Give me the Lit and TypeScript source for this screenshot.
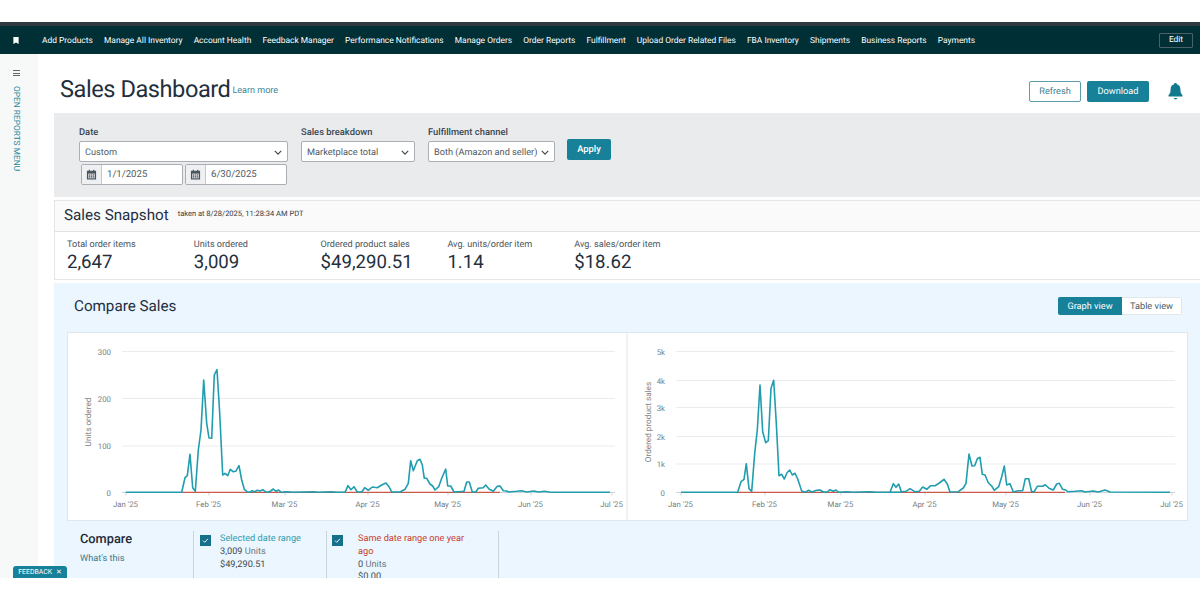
import { LitElement, html, css, svg } from "lit";
import { customElement } from "lit/decorators.js";

type P = [number, number];
const conv = (pts: P[], ox: number): P[] => pts.map(([x, y]) => [ox + x / 3, 330 + y / 3]);

const L1: P[] = [
  ...conv([[197,487],[365,487],[375,443],[382,437],[390,373],[398,473],[406,484],[415,360],[423,300],[431,150],[440,280],[447,324],[455,325],[463,135],[471,119],[479,250],[488,435],[495,430],[503,437],[511,418],[519,425],[527,424],[537,407],[545,450],[553,478],[561,485],[569,487],[576,482],[584,485],[592,481],[600,483],[608,479],[616,485],[624,487],[632,483],[640,477],[648,484],[656,480],[664,487],[680,485],[700,487],[760,485],[775,487],[815,485],[830,487]], 60),
  ...conv([[15,487],[24,467],[33,479],[42,470],[52,486],[65,486],[74,473],[85,481],[97,471],[112,473],[125,465],[138,459],[147,470],[155,486],[180,486],[195,478],[205,460],[212,392],[220,422],[232,392],[240,388],[247,405],[253,445],[260,445],[270,462],[278,468],[285,480],[296,470],[305,445],[317,417],[323,468],[332,468],[342,486],[355,485],[372,484],[380,456],[388,456],[397,486],[407,486],[415,475],[430,473],[437,465],[447,477],[460,484],[472,469],[480,468],[490,482],[500,483],[505,486],[530,484],[545,482],[560,486],[582,483],[595,486],[615,484],[630,487],[810,487]], 340),
];
const L2: P[] = [
  ...conv([[183,487],[353,487],[363,455],[372,448],[379,401],[387,476],[395,484],[404,370],[412,300],[420,165],[428,305],[437,338],[445,332],[453,175],[461,151],[469,280],[477,437],[485,433],[493,447],[501,428],[509,420],[517,435],[525,430],[533,447],[545,483],[555,487],[566,481],[575,486],[590,481],[600,480],[610,486],[622,486],[630,479],[640,484],[648,480],[656,487],[680,485],[700,487],[750,485],[770,487],[840,487]], 620),
  ...conv([[-30,487],[-20,461],[-12,472],[-4,462],[4,485],[18,484],[30,476],[44,485],[58,484],[68,471],[80,478],[92,467],[105,467],[118,459],[132,448],[142,462],[150,486],[175,485],[190,474],[198,460],[207,372],[216,408],[224,407],[232,386],[240,382],[247,433],[255,435],[265,458],[275,468],[283,481],[296,470],[305,440],[313,408],[320,465],[330,461],[340,486],[355,482],[368,482],[376,446],[386,446],[395,486],[403,484],[412,469],[428,469],[436,464],[447,475],[460,480],[470,462],[478,460],[488,478],[497,480],[503,485],[525,484],[545,482],[555,486],[580,483],[595,486],[615,480],[630,486],[810,487]], 900),
];

interface ChartDef {
  line: P[];
  gridX: [number, number];
  yTicks: [string, number][];
  xTicks: [string, number][];
  yLabel: string;
  yLabelX: number;
  redTo: number;
  redFrom: number;
}

const chart1: ChartDef = {
  line: L1,
  gridX: [122, 615],
  yTicks: [["300", 351.5], ["200", 398.5], ["100", 446], ["0", 492.5]],
  xTicks: [["Jan '25", 126], ["Feb '25", 209], ["Mar '25", 285], ["Apr '25", 368], ["May '25", 448], ["Jun '25", 531], ["Jul '25", 612]],
  yLabel: "Units ordered",
  yLabelX: 91,
  redFrom: 182,
  redTo: 500,
};
const chart2: ChartDef = {
  line: L2,
  gridX: [676, 1175],
  yTicks: [["5k", 351.5], ["4k", 380.5], ["3k", 407.5], ["2k", 436.5], ["1k", 464], ["0", 492.5]],
  xTicks: [["Jan '25", 681], ["Feb '25", 765], ["Mar '25", 841], ["Apr '25", 925], ["May '25", 1006], ["Jun '25", 1090], ["Jul '25", 1172]],
  yLabel: "Ordered product sales",
  yLabelX: 651,
  redFrom: 738,
  redTo: 1065,
};

const OX = 68, OY = 333;

function renderChart(c: ChartDef) {
  const pts = c.line.map(([x, y]) => `${(x - OX).toFixed(1)},${(y - OY).toFixed(1)}`).join(" ");
  const base = 492.5 - OY;
  const midY = (351.5 + 492.5) / 2 - OY;
  return svg`
    ${c.yTicks.map(([t, y]) => svg`
      <line x1=${c.gridX[0] - OX} x2=${c.gridX[1] - OX} y1=${y - OY} y2=${y - OY} stroke=${t === "0" ? "#cfd4d8" : "#e8ecef"} stroke-width="1"></line>
      <text x=${c.gridX[0] - OX - 11} y=${y - OY + 3} text-anchor="end" class="tick">${t}</text>
    `)}
    ${c.xTicks.map(([t, x]) => svg`
      <line x1=${x - OX} x2=${x - OX} y1=${base} y2=${base + 3} stroke="#cfd4d8"></line>
      <text x=${x - OX - 0.5} y=${base + 14} text-anchor="middle" class="tick">${t}</text>
    `)}
    <text transform="translate(${c.yLabelX - OX} ${midY}) rotate(-90)" text-anchor="middle" class="ylab">${c.yLabel}</text>
    <line x1=${c.redFrom - OX} x2=${c.redTo - OX} y1=${base - 0.2} y2=${base - 0.2} stroke="#c9574a" stroke-width="1.2"></line>
    <polyline points=${pts} fill="none" stroke="#209dae" stroke-width="1.6" stroke-linejoin="round"></polyline>
  `;
}

const navItems = ["Add Products", "Manage All Inventory", "Account Health", "Feedback Manager", "Performance Notifications", "Manage Orders", "Order Reports", "Fulfillment", "Upload Order Related Files", "FBA Inventory", "Shipments", "Business Reports", "Payments"];

const metrics: [string, string][] = [
  ["Total order items", "2,647"],
  ["Units ordered", "3,009"],
  ["Ordered product sales", "$49,290.51"],
  ["Avg. units/order item", "1.14"],
  ["Avg. sales/order item", "$18.62"],
];

const chevron = html`<svg class="chev" viewBox="0 0 10 6" width="8" height="5"><path d="M1 1l4 4 4-4" fill="none" stroke="#3d4a50" stroke-width="1.5"></path></svg>`;
const cal = html`<svg viewBox="0 0 12 12" width="11" height="11"><path fill="#4a545c" d="M1 2h2V.8h1.2V2h3.6V.8H9V2h2v9.5H1z"></path><rect x="2.2" y="5" width="7.6" height="5.2" fill="#cfd3d6"></rect><path fill="#4a545c" d="M3 6h1.4v1.2H3zM5.3 6h1.4v1.2H5.3zM7.6 6H9v1.2H7.6zM3 8h1.4v1.2H3zM5.3 8h1.4v1.2H5.3zM7.6 8H9v1.2H7.6z"></path></svg>`;
const check = html`<span class="check"><svg viewBox="0 0 10 10" width="7" height="7"><path d="M1.5 5.2l2.4 2.4 4.6-5" fill="none" stroke="#fff" stroke-width="1.3"></path></svg></span>`;

@customElement("app-root")
export class AppRoot extends LitElement {
  static styles = css`
    :host { display: block; position: relative; width: 1200px; height: 601px; background: #fff; overflow: hidden; font-family: Roboto, "Open Sans", sans-serif; text-rendering: geometricPrecision; color: #1f2b36; padding-top: 22px; box-sizing: border-box; }
    .stripe { height: 4px; background: #2f3a40; }
    .nav { height: 28px; background: #002f36; color: #fff; display: flex; align-items: center; font-size: 8.42px; }
    .mark { width: 42px; display: flex; padding-left: 13px; box-sizing: border-box; }
    .items { display: flex; gap: 11.2px; flex: 1; white-space: nowrap; padding-top: 1px; }
    .edit { width: 34px; height: 15px; box-sizing: border-box; border: 1px solid #4a6268; border-radius: 1px; margin-right: 7px; display: flex; align-items: center; justify-content: center; }
    .body { display: flex; height: 524px; overflow: hidden; }
    .side { width: 38px; flex: none; background: #f7f8f8; display: flex; flex-direction: column; align-items: center; padding: 16px 6px 0 0; box-sizing: border-box; }
    .burger { width: 7px; height: 6px; border-top: 1px solid #666; border-bottom: 1px solid #666; box-sizing: border-box; margin-bottom: 10px; background: linear-gradient(#666,#666) center/100% 1px no-repeat; }
    .vert { writing-mode: vertical-rl; font-size: 8.4px; color: #2a8aa0; white-space: nowrap; }
    .main { flex: 1; min-width: 0; display: flex; flex-direction: column; }
    .head { height: 59px; display: flex; align-items: flex-start; padding: 0 17px 0 22px; box-sizing: border-box; }
    .title { font-size: 23.6px; line-height: 30px; margin-top: 20px; color: #232f3e; white-space: nowrap; letter-spacing: -0.45px; }
    .learn { font-size: 9px; color: #3a8494; margin: 32px 0 0 2px; flex: 1; }
    .btn { height: 21px; box-sizing: border-box; border-radius: 2px; font-size: 9.2px; display: flex; align-items: center; justify-content: center; margin-top: 27px; }
    .ghost { width: 52px; border: 1px solid #5b9fad; color: #41818f; background: #fff; }
    .solid { width: 62px; margin-left: 6px; background: #17819a; color: #fff; }
    .bell { margin: 28px 0 0 19px; }
    .filters { margin-left: 16px; height: 84px; flex: none; background: #e9ebed; padding: 12px 0 0 25px; box-sizing: border-box; display: flex; gap: 13px; }
    .group { display: flex; flex-direction: column; }
    .lbl { font-size: 9.4px; font-weight: 500; color: #3a4650; line-height: 13px; padding-top: 1px; margin-bottom: 2px; white-space: nowrap; }
    .sel { height: 21px; box-sizing: border-box; background: #fff; border: 1px solid #a9afb4; border-radius: 2px; display: flex; align-items: center; justify-content: space-between; padding: 1px 5px 0; font-size: 9.2px; color: #4f5a62; white-space: nowrap; }
    .dates { display: flex; gap: 2px; margin: 2px 0 0 2px; }
    .date { height: 21px; box-sizing: border-box; background: #fff; border: 1px solid #a9afb4; border-radius: 2px; display: flex; align-items: center; font-size: 9.6px; color: #4f5a62; }
    .ic { width: 19px; height: 100%; display: flex; align-items: center; justify-content: center; background: #eef0f1; border-right: 1px solid #c4c8cb; }
    .date span { padding-left: 5px; }
    .apply { width: 44px; height: 21px; background: #17819a; color: #fff; font-size: 9.4px; font-weight: 500; border-radius: 2px; display: flex; align-items: center; justify-content: center; margin: 14px 0 0 -1px; }
    .snap { margin: 3px 0 0 16px; flex: none; height: 80px; box-sizing: border-box; border: 1px solid #e4e6e8; border-right: 0; background: #fff; }
    .snap-h { height: 31px; box-sizing: border-box; background: #fafafa; border-bottom: 1px solid #dfe2e4; display: flex; padding: 0 0 2px 9px; align-items: center; }
    .snap-t { font-size: 15.2px; color: #232f3e; white-space: nowrap; }
    .snap-s { font-size: 7.5px; color: #333d47; margin: 0 0 4px 9px; white-space: nowrap; }
    .mets { display: flex; padding: 8px 0 0 12px; }
    .met { width: 126.8px; flex: none; }
    .met-l { font-size: 9.1px; line-height: 11px; color: #4a545c; white-space: nowrap; }
    .met-v { font-size: 18.6px; line-height: 23px; color: #232f3e; }
    .blue { margin: 3px 0 0 16px; flex: 1; background: #ebf6fe; padding: 0 12px 0 13px; min-height: 0; overflow: hidden; display: flex; flex-direction: column; }
    .blue-h { height: 49px; flex: none; display: flex; align-items: flex-start; justify-content: space-between; padding: 0 6px 0 7px; }
    .blue-t { font-size: 15.2px; line-height: 20px; margin-top: 13px; color: #232f3e; }
    .toggle { display: flex; margin-top: 14px; height: 18px; font-size: 9.2px; }
    .t-on { width: 64px; background: #17819a; color: #fff; display: flex; align-items: center; justify-content: center; border-radius: 2px 0 0 2px; }
    .t-off { width: 60px; background: #fff; color: #4d5a62; border: 1px solid #e2e7ea; border-left: 0; box-sizing: border-box; display: flex; align-items: center; justify-content: center; border-radius: 0 2px 2px 0; }
    .charts { width: 1121px; height: 189px; flex: none; background: #fff; border: 1px solid #dfe7ee; box-sizing: border-box; }
    .charts svg { display: block; }
    .tick { font-size: 7.8px; fill: #757d82; font-family: Roboto, sans-serif; }
    .ylab { font-size: 8.2px; fill: #7d858a; font-family: Roboto, sans-serif; }
    .compare { display: flex; flex: 1; align-items: flex-start; }
    .cmp-a { width: 126px; flex: none; padding: 10px 0 0 13px; box-sizing: border-box; }
    .cmp-t { font-size: 12.8px; font-weight: 500; line-height: 17px; color: #1f2b36; }
    .cmp-l { font-size: 9.2px; color: #3a7a88; margin-top: 5px; }
    .cell { border-left: 1px solid #c9d3da; height: 60px; margin-top: 10px; display: flex; box-sizing: border-box; padding: 0 0 0 6px; gap: 9px; flex: none; }
    .c1 { width: 133px; }
    .c2 { width: 173px; border-right: 1px solid #c9d3da; padding-left: 5px; gap: 15px; }
    .check { width: 11px; height: 11px; background: #17708a; display: flex; align-items: center; justify-content: center; margin-top: 4px; flex: none; }
    .ctext { font-size: 9.2px; line-height: 12.8px; color: #3d4a52; padding-top: 2px; }
    .sel-t { color: #2f9cb0; }
    .red { color: #c8402f; width: 122px; }
    .mut { color: #6b7780; }
    .fb { position: absolute; left: 13px; top: 566px; width: 54px; height: 12px; background: #17819a; color: #fff; font-size: 6.9px; border-radius: 3px 3px 0 0; display: flex; align-items: center; justify-content: center; gap: 4px; white-space: nowrap; }
  `;

  render() {
    return html`
      <div class="stripe"></div>
      <div class="nav">
        <div class="mark"><svg viewBox="0 0 6 8" width="6" height="7"><path fill="#fff" d="M0 0h6v8L3 6.4 0 8z"></path></svg></div>
        <div class="items">${navItems.map((n) => html`<span>${n}</span>`)}</div>
        <div class="edit">Edit</div>
      </div>
      <div class="body">
        <div class="side"><div class="burger"></div><div class="vert">OPEN REPORTS MENU</div></div>
        <div class="main">
          <div class="head">
            <div class="title">Sales Dashboard</div>
            <div class="learn">Learn more</div>
            <div class="btn ghost">Refresh</div>
            <div class="btn solid">Download</div>
            <svg class="bell" width="15" height="18" viewBox="0 0 15 18"><path fill="#117a8f" d="M7.5 1c.8 0 1.3.5 1.4 1.3 2.3.6 3.5 2.5 3.5 5 0 3 .6 4.4 2.1 5.9v1.2H.5v-1.2C2 11.7 2.6 10.3 2.6 7.3c0-2.5 1.2-4.4 3.5-5C6.2 1.5 6.7 1 7.5 1zM5.8 15.900h3.400c0 .9-.8 1.400-1.700 1.400s-1.700-.5-1.700-1.400z"></path></svg>
          </div>
          <div class="filters">
            <div class="group">
              <div class="lbl">Date</div>
              <div class="sel" style="width:209px"><span>Custom</span>${chevron}</div>
              <div class="dates">
                <div class="date" style="width:102px"><div class="ic">${cal}</div><span>1/1/2025</span></div>
                <div class="date" style="width:102px"><div class="ic">${cal}</div><span>6/30/2025</span></div>
              </div>
            </div>
            <div class="group">
              <div class="lbl">Sales breakdown</div>
              <div class="sel" style="width:114px"><span>Marketplace total</span>${chevron}</div>
            </div>
            <div class="group">
              <div class="lbl">Fulfillment channel</div>
              <div class="sel" style="width:127px"><span>Both (Amazon and seller)</span>${chevron}</div>
            </div>
            <div class="apply">Apply</div>
          </div>
          <div class="snap">
            <div class="snap-h"><span class="snap-t">Sales Snapshot</span><span class="snap-s">taken at 8/28/2025, 11:28:34 AM PDT</span></div>
            <div class="mets">${metrics.map(([l, v]) => html`<div class="met"><div class="met-l">${l}</div><div class="met-v">${v}</div></div>`)}</div>
          </div>
          <div class="blue">
            <div class="blue-h">
              <div class="blue-t">Compare Sales</div>
              <div class="toggle"><div class="t-on">Graph view</div><div class="t-off">Table view</div></div>
            </div>
            <div class="charts">
              <svg width="1119" height="187" viewBox="0 0 1119 187">
                <line x1="559" x2="559" y1="0" y2="187" stroke="#dfe7ee"></line>
                ${renderChart(chart1)}
                ${renderChart(chart2)}
              </svg>
            </div>
            <div class="compare">
              <div class="cmp-a"><div class="cmp-t">Compare</div><div class="cmp-l">What's this</div></div>
              <div class="cell c1">${check}<div class="ctext"><div class="sel-t">Selected date range</div><div>3,009 <span class="mut">Units</span></div><div>$49,290.51</div></div></div>
              <div class="cell c2">${check}<div class="ctext"><div class="red">Same date range one year ago</div><div>0 <span class="mut">Units</span></div><div>$0.00</div></div></div>
            </div>
          </div>
        </div>
      </div>
      <div class="fb"><span>FEEDBACK</span><span>✕</span></div>
    `;
  }
}
